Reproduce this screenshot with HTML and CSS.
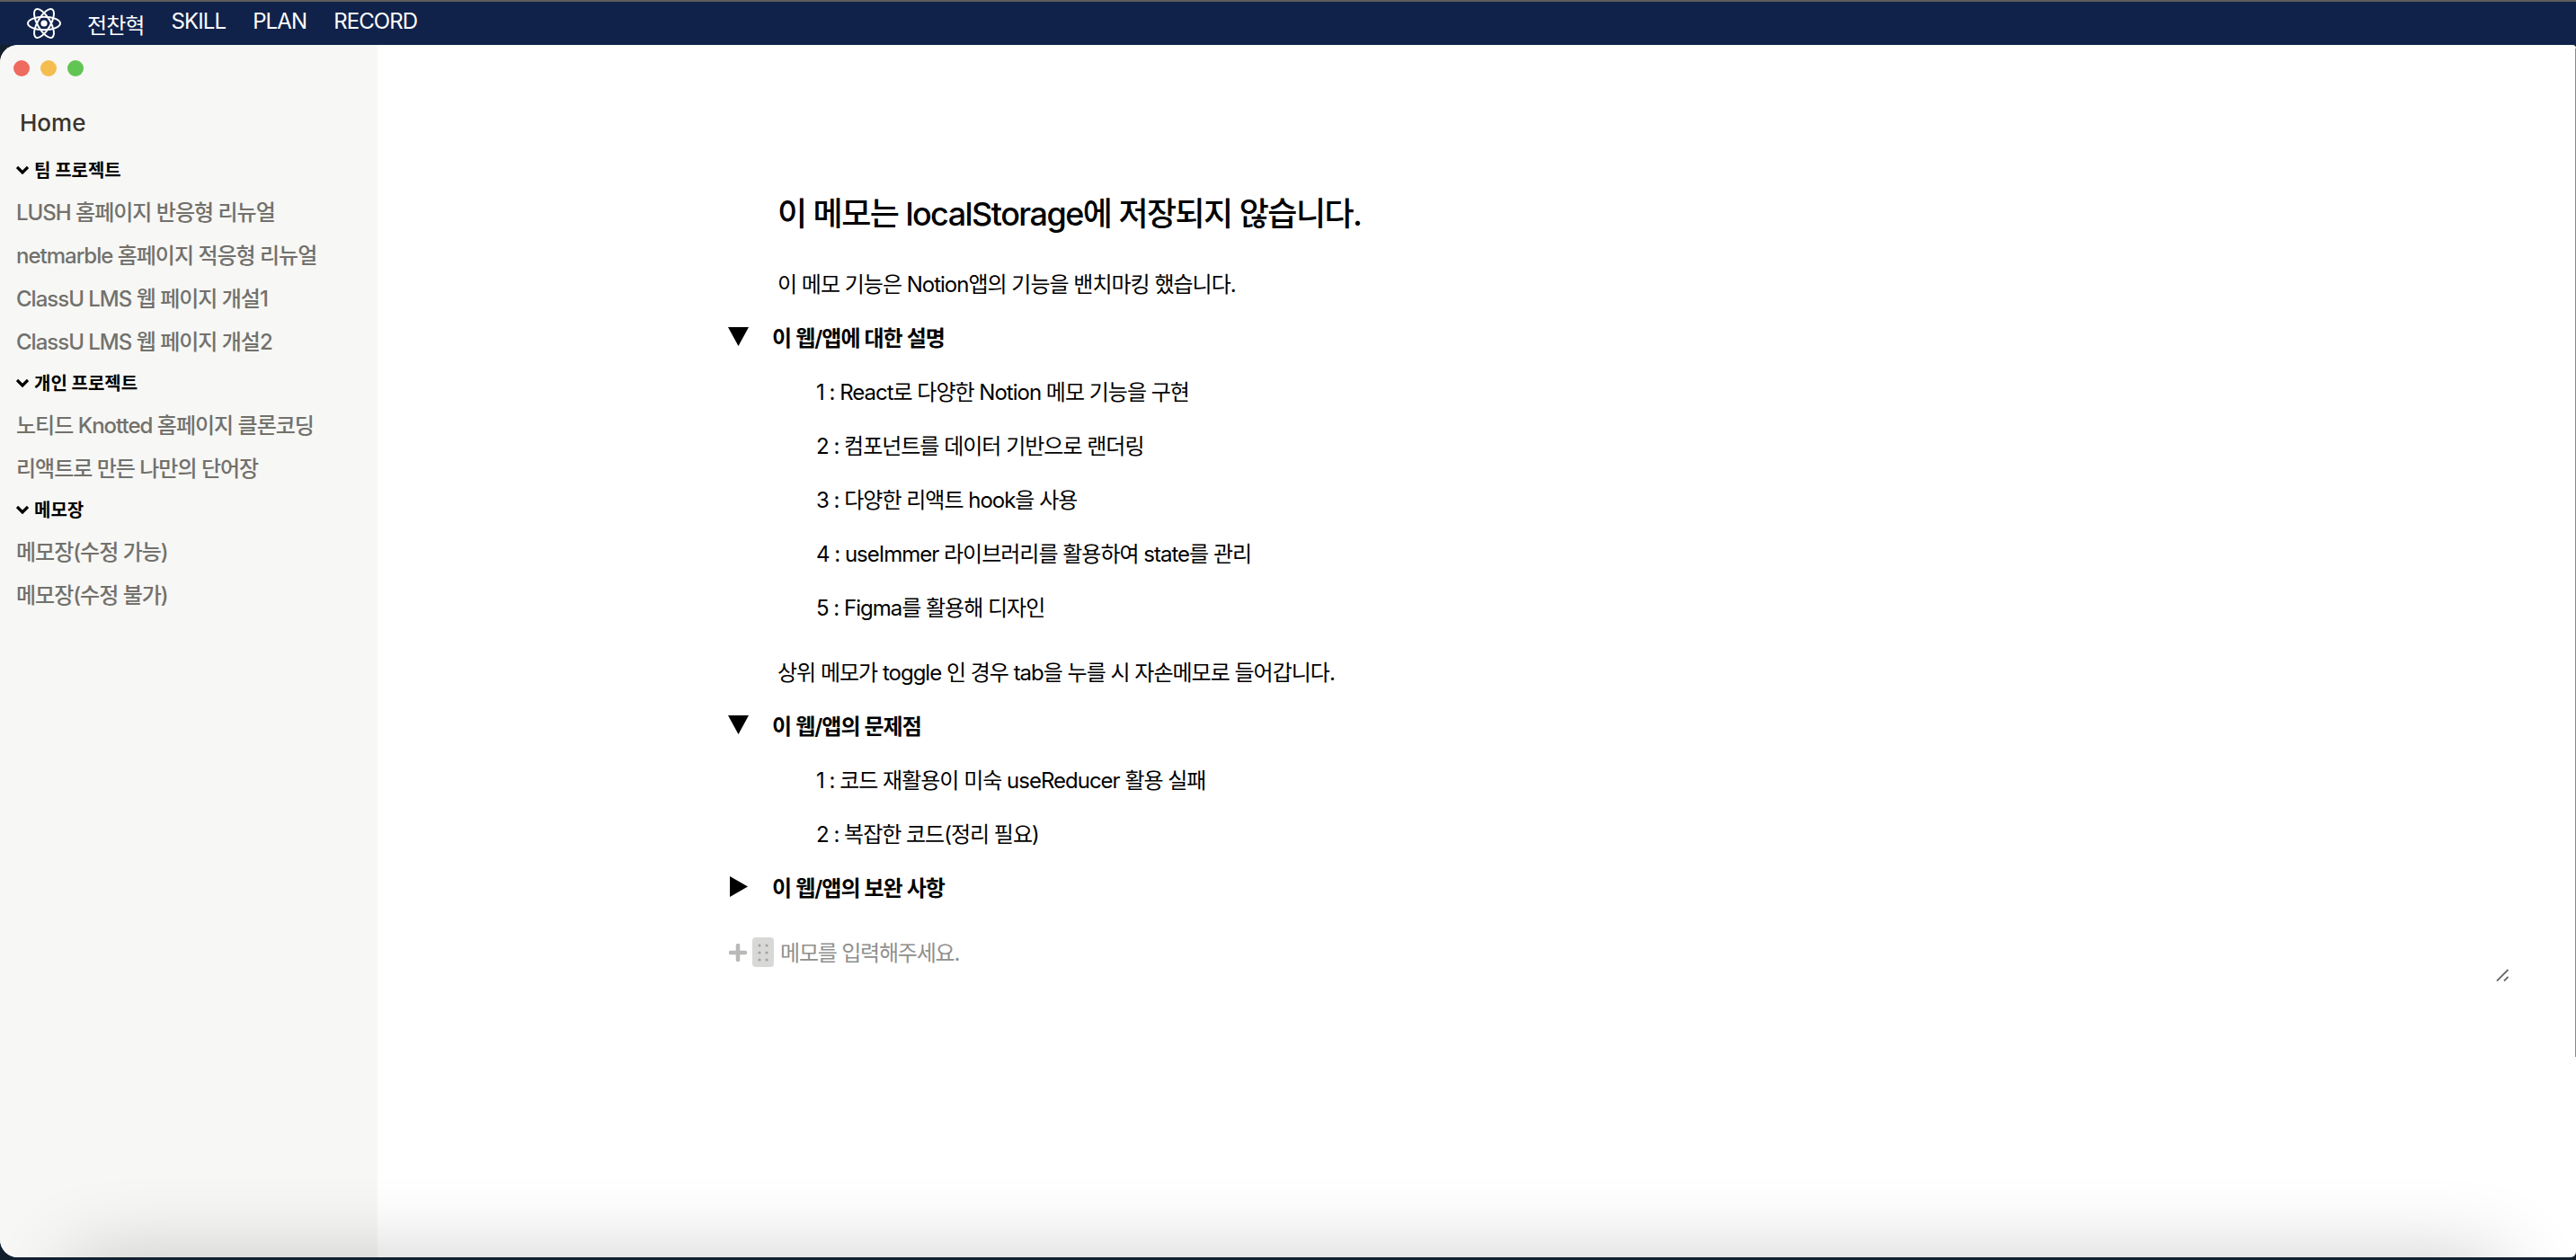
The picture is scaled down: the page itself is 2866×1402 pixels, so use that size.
FILE: index.html
```html
<!DOCTYPE html>
<html lang="ko">
<head>
  <meta charset="utf-8">
  <title>전찬혁</title>
  <link rel="stylesheet" href="styles.css">
</head>
<body>

<header class="topbar">
  <svg class="logo" viewBox="0 0 40 40" fill="none" stroke="#fff" stroke-width="2">
    <ellipse cx="20" cy="20" rx="18" ry="7.2"/>
    <ellipse cx="20" cy="20" rx="18" ry="7.2" transform="rotate(60 20 20)"/>
    <ellipse cx="20" cy="20" rx="18" ry="7.2" transform="rotate(120 20 20)"/>
    <circle cx="20" cy="20" r="3.6" fill="#fff" stroke="none"/>
  </svg>
  <nav class="topnav">
    <a>전찬혁</a>
    <a>SKILL</a>
    <a>PLAN</a>
    <a>RECORD</a>
  </nav>
</header>

<div class="window">
  <aside class="sidebar">
    <div class="dots">
      <span class="dot red"></span>
      <span class="dot yellow"></span>
      <span class="dot green"></span>
    </div>
    <div class="home">Home</div>

    <div class="group">
      <svg class="chevron" viewBox="0 0 14 10" fill="none" stroke="#000" stroke-width="3.2"><path d="M1 2 7 8l6-6"/></svg>
      팀 프로젝트
    </div>
    <a class="item">LUSH 홈페이지 반응형 리뉴얼</a>
    <a class="item">netmarble 홈페이지 적응형 리뉴얼</a>
    <a class="item">ClassU LMS 웹 페이지 개설1</a>
    <a class="item">ClassU LMS 웹 페이지 개설2</a>

    <div class="group">
      <svg class="chevron" viewBox="0 0 14 10" fill="none" stroke="#000" stroke-width="3.2"><path d="M1 2 7 8l6-6"/></svg>
      개인 프로젝트
    </div>
    <a class="item">노티드 Knotted 홈페이지 클론코딩</a>
    <a class="item">리액트로 만든 나만의 단어장</a>

    <div class="group">
      <svg class="chevron" viewBox="0 0 14 10" fill="none" stroke="#000" stroke-width="3.2"><path d="M1 2 7 8l6-6"/></svg>
      메모장
    </div>
    <a class="item">메모장(수정 가능)</a>
    <a class="item">메모장(수정 불가)</a>
  </aside>

  <main class="memo">
    <h1 class="memo-title">이 메모는 localStorage에 저장되지 않습니다.</h1>
    <p class="line">이 메모 기능은 Notion앱의 기능을 밴치마킹 했습니다.</p>

    <div class="toggle">
      <svg class="arrow" viewBox="0 0 23 21"><polygon points="0,0 23,0 11.5,21"/></svg>
      <b>이 웹/앱에 대한 설명</b>
    </div>
    <p class="line sub">1 : React로 다양한 Notion 메모 기능을 구현</p>
    <p class="line sub">2 : 컴포넌트를 데이터 기반으로 랜더링</p>
    <p class="line sub">3 : 다양한 리액트 hook을 사용</p>
    <p class="line sub">4 : useImmer 라이브러리를 활용하여 state를 관리</p>
    <p class="line sub">5 : Figma를 활용해 디자인</p>

    <p class="line gap">상위 메모가 toggle 인 경우 tab을 누를 시 자손메모로 들어갑니다.</p>

    <div class="toggle">
      <svg class="arrow" viewBox="0 0 23 21"><polygon points="0,0 23,0 11.5,21"/></svg>
      <b>이 웹/앱의 문제점</b>
    </div>
    <p class="line sub">1 : 코드 재활용이 미숙 useReducer 활용 실패</p>
    <p class="line sub">2 : 복잡한 코드(정리 필요)</p>

    <div class="toggle">
      <svg class="arrow closed" viewBox="0 0 20 23"><polygon points="0,0 20,11.5 0,23"/></svg>
      <b>이 웹/앱의 보완 사항</b>
    </div>

    <div class="editor">
      <svg class="plus" viewBox="0 0 20 20" fill="none" stroke="#b9b9b7" stroke-width="4.5" stroke-linecap="round"><path d="M10 2v16M2 10h16"/></svg>
      <span class="handle">
        <svg viewBox="0 0 12 20" fill="#a3a3a1">
          <circle cx="2" cy="2" r="1.6"/><circle cx="10" cy="2" r="1.6"/>
          <circle cx="2" cy="10" r="1.6"/><circle cx="10" cy="10" r="1.6"/>
          <circle cx="2" cy="18" r="1.6"/><circle cx="10" cy="18" r="1.6"/>
        </svg>
      </span>
      <textarea class="input" placeholder="메모를 입력해주세요."></textarea>
      <svg class="grip" viewBox="0 0 14 14" fill="none" stroke="#666" stroke-width="1.8"><path d="M1 13.5 13.5 1M9 13.5l4.5-4.5"/></svg>
    </div>
  </main>
</div>

</body>
</html>
```

FILE: styles.css
```css
html, body {
  height: 100%;
}
body {
  margin: 0;
  overflow: hidden;
  background-color: #12202e;
  font-family: Inter, "Noto Sans CJK KR", sans-serif;
  font-size: 24px;
  display: flex;
  flex-direction: column;
}
.topbar {
  height: 48px;
  border-top: 2px solid #5c5c5c;
  background-color: #10224a;
  display: flex;
  align-items: center;
  padding-left: 29px;
  flex-shrink: 0;
}
.logo {
  width: 40px;
  height: 40px;
}
.topnav {
  display: flex;
  gap: 30px;
  margin-left: 28px;
  color: #fff;
  font-size: 24px;
  letter-spacing: -0.9px;
}
.window {
  flex: 1;
  display: flex;
  margin-bottom: 3px;
  border-radius: 20px 4px 6px 20px;
  overflow: hidden;
  background-color: #fff;
  position: relative;
}
/* thin line down the right edge */
.window::before {
  content: "";
  position: absolute;
  top: 4px;
  right: 0;
  width: 1px;
  height: 1122px;
  background-color: #8a8a8a;
}
/* sits just under the window, only its blur shows along the bottom edge */
.window::after {
  content: "";
  position: absolute;
  left: 80px;
  right: 80px;
  bottom: -100px;
  height: 100px;
  box-shadow: 0 0 90px rgba(0, 0, 0, 0.2);
  pointer-events: none;
}
.sidebar {
  width: 420px;
  flex-shrink: 0;
  background-color: #f7f7f5;
  box-sizing: border-box;
  padding: 17px 0 0 18px;
}
.dots {
  display: flex;
  gap: 12px;
  margin-left: -3px;
}
.dot {
  width: 18px;
  height: 18px;
  border-radius: 50%;
}
.red { background-color: #ef6a5f; }
.yellow { background-color: #f5bd4f; }
.green { background-color: #61c554; }
.home {
  color: #37352f;
  font-size: 26px;
  font-weight: 500;
  line-height: 32px;
  margin: 36px 0 0 4px;
}
.group {
  display: flex;
  align-items: center;
  gap: 6px;
  font-size: 20px;
  font-weight: 700;
  color: #000;
  height: 45px;
}
.home + .group {
  margin-top: 13px;
}
.chevron {
  width: 14px;
  height: 10px;
}
.item {
  display: block;
  color: #72716c;
  font-size: 24px;
  font-weight: 500;
  letter-spacing: -1px;
  line-height: 44px;
  padding-top: 4px;
  white-space: nowrap;
}
.memo {
  flex: 1;
  box-sizing: border-box;
  padding: 156px 0 0 390px;
  color: #000;
}
.memo-title {
  margin: 0;
  padding-left: 55px;
  font-size: 36px;
  font-weight: 500;
  line-height: 64px;
  letter-spacing: -1.55px;
}
.line {
  margin: 0;
  padding-left: 55px;
  line-height: 60px;
  letter-spacing: -1px;
  position: relative;
  top: 1px;
}
.memo-title + .line {
  margin-top: 16px;
}
.sub {
  padding-left: 98px;
}
.gap {
  margin-top: 12px;
}
.toggle {
  display: flex;
  align-items: center;
  box-sizing: border-box;
  height: 60px;
  padding-bottom: 4px;
  letter-spacing: -1px;
}
.toggle b {
  font-weight: 600;
  margin-left: 26px;
}
.arrow {
  width: 23px;
  height: 21px;
}
.closed {
  width: 20px;
  height: 23px;
  margin: 0 1px 0 2px;
}
.editor {
  display: flex;
  align-items: flex-start;
  margin-top: 22px;
  position: relative;
}
.plus {
  width: 20px;
  height: 20px;
  margin: 10px 0 0 1px;
}
.handle {
  width: 24px;
  height: 33px;
  margin: 3px 0 0 6px;
  border-radius: 4px;
  background-color: #d8d8d6;
  display: flex;
  align-items: center;
  justify-content: center;
  flex-shrink: 0;
}
.handle svg {
  width: 12px;
  height: 20px;
}
.input {
  width: 1926px;
  height: 52px;
  margin-left: 7px;
  padding: 0;
  border: none;
  outline: none;
  resize: none;
  background: transparent;
  font-family: inherit;
  font-size: 24px;
  letter-spacing: -1.2px;
  line-height: 42px;
}
.input::placeholder {
  color: #8f8f8d;
}
/* resize corner of the textarea */
.grip {
  position: absolute;
  left: 1967px;
  top: 38px;
  width: 14px;
  height: 14px;
}
```
